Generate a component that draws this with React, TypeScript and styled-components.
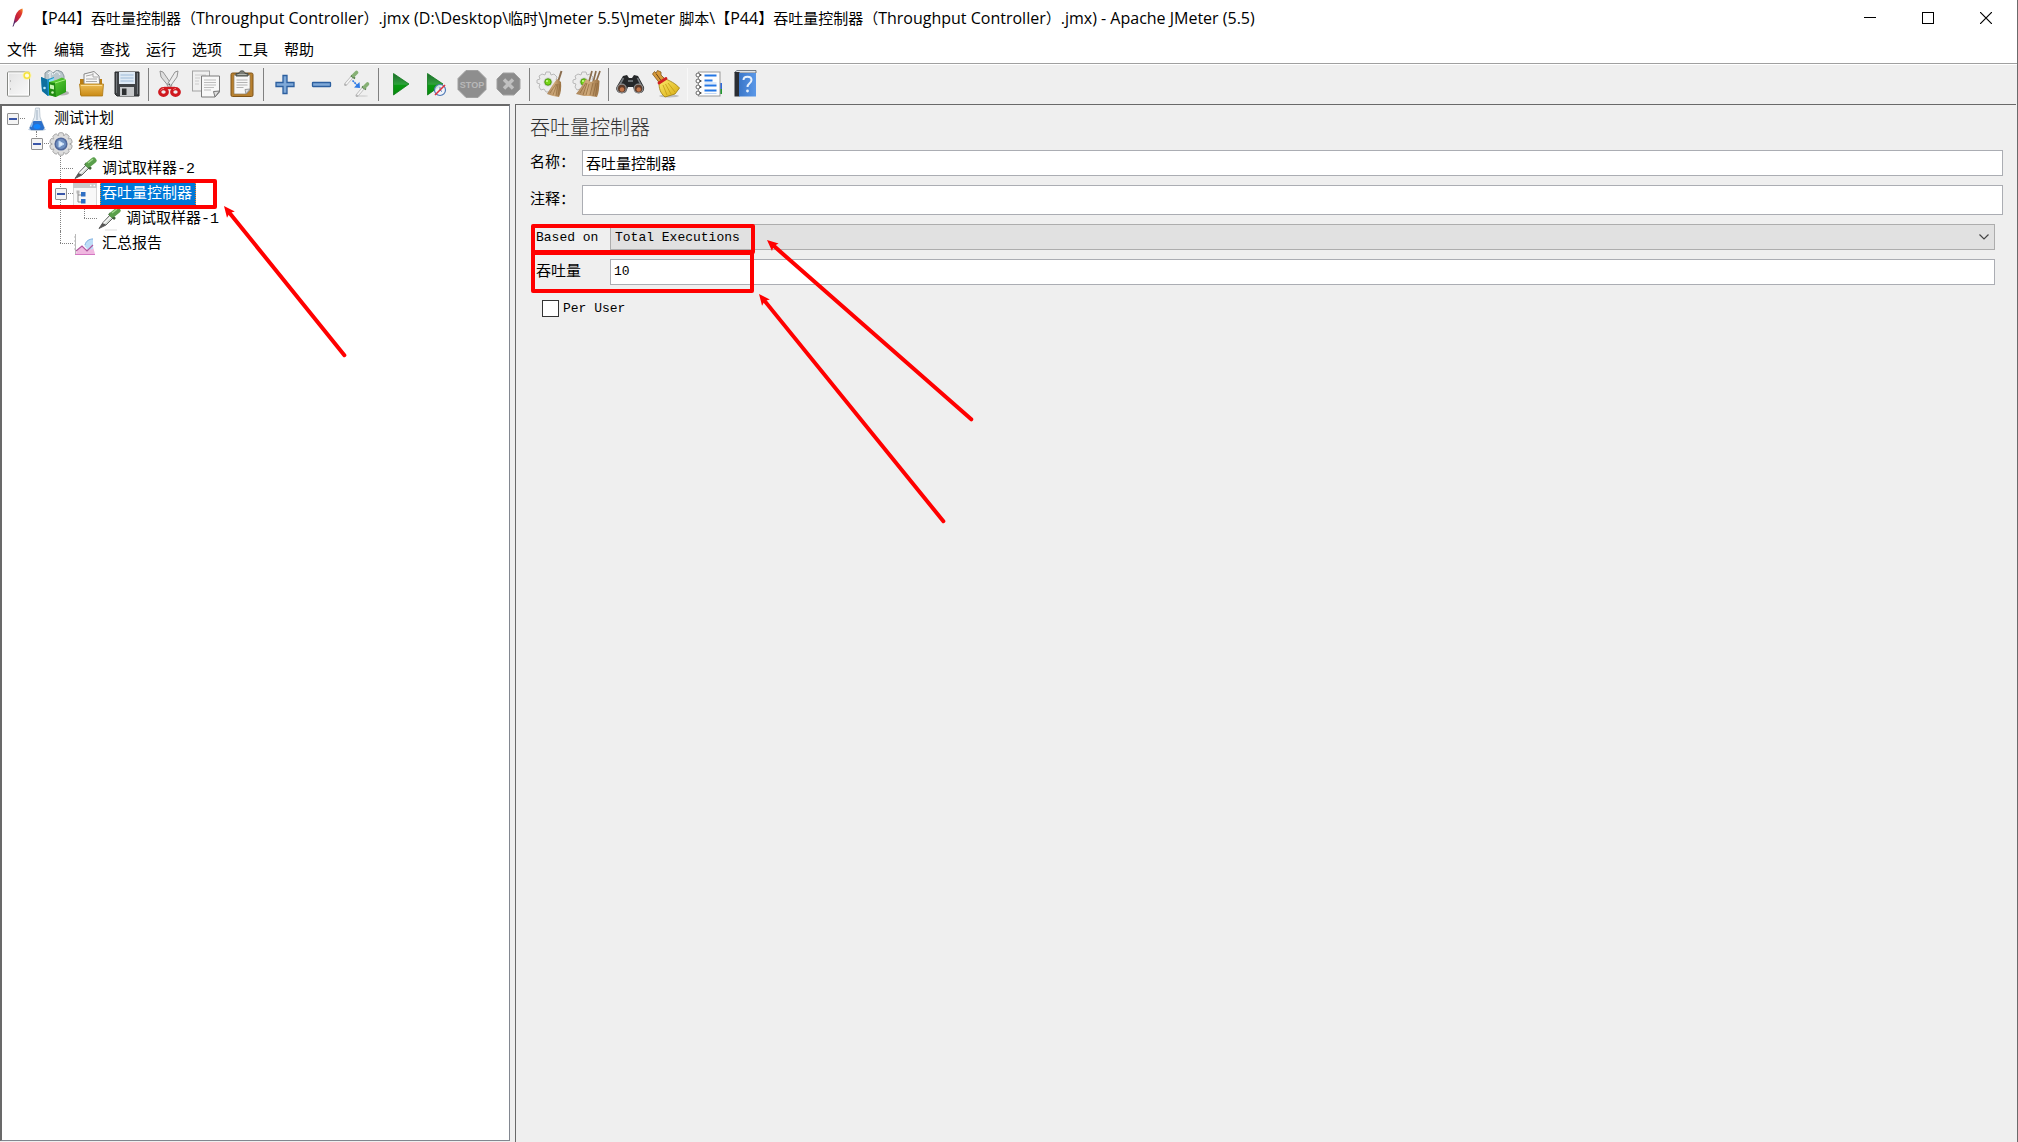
import React from "react";
import styled, { createGlobalStyle, css } from "styled-components";

const uiFont = `"Open Sans", "Noto Sans CJK SC", sans-serif`;
const formFont = `"Liberation Mono", "Noto Sans CJK SC", monospace`;

const GlobalStyle = createGlobalStyle`
  *, *::before, *::after { box-sizing: border-box; }
  body { margin: 0; background: #fff; }
  button, input, select { margin: 0; font: inherit; color: inherit; }
`;

const Window = styled.div`
  position: relative;
  display: flex;
  flex-direction: column;
  min-height: 100vh;
  border-right: 1px solid #6b6b6b;
  background: #fff;
  color: #000;
  font-family: ${uiFont};
  font-size: 15px;
  text-spacing-trim: space-all;
`;

const TitleBar = styled.header`
  display: flex;
  align-items: center;
  height: 36px;
  padding: 0 2px 0 10px;
`;

const Title = styled.h1`
  flex: 1;
  margin: 0 0 0 9px;
  font-size: 15px;
  font-weight: 400;
  line-height: 24px;
  white-space: pre;
`;

const LatinRun = styled.span`
  font-size: 16px;
`;

const CaptionButton = styled.button`
  display: flex;
  align-items: center;
  justify-content: center;
  width: 58px;
  height: 36px;
  padding: 0;
  border: 0;
  background: transparent;
`;

const MenuBar = styled.nav`
  display: flex;
  height: 28px;
  border-bottom: 1px solid #a0a0a0;
`;

const MenuItem = styled.button`
  padding: 0 8px 2px;
  border: 0;
  background: transparent;
  line-height: 24px;

  &:first-child {
    padding-right: 9px;
    padding-left: 7px;
  }
`;

const ToolBar = styled.div`
  display: flex;
  align-items: center;
  height: 40px;
  padding: 0 0 1px 1px;
  border-top: 1px solid #fff;
  background: #efefef;
`;

const ToolButton = styled.button`
  display: flex;
  align-items: center;
  justify-content: center;
  width: 36px;
  height: 36px;
  padding: 0;
  border: 0;
  background: transparent;
`;

const ToolSeparator = styled.span<{ $faint?: boolean }>`
  width: 1px;
  height: 33px;
  margin: 0 3px;
  background: ${(p) => (p.$faint ? "#f8f8f8" : "#808080")};
`;

const Workspace = styled.main`
  display: grid;
  grid-template-columns: 510px 1fr;
  column-gap: 5px;
  flex: 1;
  padding-right: 1px;
  background: #efefef;
`;

const TreePane = styled.aside`
  margin-bottom: 1px;
  border: solid #696969;
  border-width: 2px 1px 1px 2px;
  border-bottom-color: #828790;
  border-right-color: #828790;
  background: #fff;
  font-family: ${formFont};
`;

const TreeList = styled.ul<{ $nested?: boolean }>`
  margin: 0;
  padding: 0 0 0 ${(p) => (p.$nested ? 24 : 0)}px;
  list-style: none;
`;

const TreeItem = styled.li<{ $root?: boolean }>`
  position: relative;

  &::before {
    content: "";
    position: absolute;
    top: 12px;
    left: 10px;
    width: 13px;
    border-top: 1px dotted #808080;
  }

  ${(p) =>
    !p.$root &&
    css`
      &::after {
        content: "";
        position: absolute;
        top: 0;
        bottom: 0;
        left: 10px;
        border-left: 1px dotted #808080;
      }
      &:last-child::after {
        bottom: auto;
        height: 12px;
      }
    `}
`;

const TreeRow = styled.div`
  display: flex;
  align-items: center;
  height: 25px;
  padding-left: 5px;
`;

const Toggle = styled.button`
  position: relative;
  z-index: 1;
  display: flex;
  align-items: center;
  justify-content: center;
  width: 12px;
  height: 12px;
  padding: 0;
  border: 1px solid #919191;
  border-radius: 1px;
  background: #f4f4f4;

  &::before {
    content: "";
    width: 8px;
    height: 2px;
    background: #3a56a8;
  }
`;

const ToggleSpace = styled.span`
  width: 12px;
`;

const NodeIcon = styled.span`
  display: flex;
  margin: 0 3px 0 6px;
`;

const NodeLabel = styled.span<{ $selected?: boolean }>`
  height: 25px;
  padding: 1px 3px 0 1px;
  border: 1px dotted ${(p) => (p.$selected ? "#ff8728" : "transparent")};
  background: ${(p) => (p.$selected ? "#0078d7" : "transparent")};
  color: ${(p) => (p.$selected ? "#fff" : "#000")};
  line-height: 24px;
  white-space: nowrap;
`;

const Editor = styled.section`
  padding: 0 13px 0 14px;
  border: solid #696969;
  border-width: 1px 0 0 1px;
  font-family: ${formFont};
`;

const EditorTitle = styled.h2`
  margin: 0;
  padding-top: 5px;
  color: #333;
  font-size: 20px;
  font-weight: 300;
  line-height: 40px;
`;

const Field = styled.div<{ $labelWidth: number }>`
  display: grid;
  grid-template-columns: ${(p) => p.$labelWidth}px 1fr;
  align-items: center;
  margin-bottom: 9px;
`;

const FieldLabel = styled.label<{ $latin?: boolean }>`
  padding-top: 2px;
  font-size: ${(p) => (p.$latin ? 13 : 15)}px;
  line-height: 24px;
  white-space: nowrap;
`;

const TextInput = styled.input<{ $tall?: boolean; $latin?: boolean }>`
  width: 100%;
  height: ${(p) => (p.$tall ? 30 : 26)}px;
  padding: 0 3px 1px;
  border: 1px solid #abadb3;
  border-radius: 0;
  outline: 0;
  background: #fff;
  font-size: ${(p) => (p.$latin ? 13 : 15)}px;
`;

const Settings = styled.div`
  padding: 0 8px 0 6px;
`;

const SelectBox = styled.div`
  position: relative;

  svg {
    position: absolute;
    top: 10px;
    right: 6px;
    pointer-events: none;
  }
`;

const Select = styled.select`
  display: block;
  width: 100%;
  height: 26px;
  padding: 1px 4px 0;
  border: 1px solid #adadad;
  border-radius: 0;
  outline: 0;
  appearance: none;
  background: #e1e1e1;
  font-size: 13px;
`;

const CheckRow = styled.label`
  display: flex;
  align-items: center;
  gap: 4px;
  margin-top: 15px;
  padding-left: 6px;
  font-size: 13px;
  line-height: 17px;
`;

const CheckBox = styled.input`
  width: 17px;
  height: 17px;
  border: 1px solid #333;
  appearance: none;
  background: #fff;
`;

const Markup = styled.svg`
  position: absolute;
  top: 0;
  left: 0;
  pointer-events: none;
`;

const GradientDefs = styled.svg`
  position: absolute;
`;

/* ---------- drawings ---------- */

const Feather = () => (
  <svg width="14" height="20" viewBox="0 0 14 20">
    <defs>
      <linearGradient id="feather" x1="0" y1="1" x2="1" y2="0">
        <stop offset="0" stopColor="#6b2a7b" />
        <stop offset=".4" stopColor="#c4203c" />
        <stop offset=".75" stopColor="#e0392d" />
        <stop offset="1" stopColor="#f69923" />
      </linearGradient>
    </defs>
    <path d="M12.500 .5 C8.500 1.500 6 5 5 9 L4 13 L3.500 16 L6.500 14 C10.500 10 13.500 5 12.500 .5Z" fill="url(#feather)" />
    <path d="M5 13 L3 18.500" stroke="#4a2a66" strokeWidth="1" fill="none" />
  </svg>
);

const Icon = ({ children }: { children: React.ReactNode }) => (
  <svg width="30" height="28" viewBox="0 0 30 28">{children}</svg>
);

const Gradients = () => (
  <GradientDefs width="0" height="0">
    <defs>
      <linearGradient id="page" x1="0" y1="0" x2="1" y2="1">
        <stop offset="0" stopColor="#e2e2e2" />
        <stop offset="1" stopColor="#fafafa" />
      </linearGradient>
      <linearGradient id="folder" x1="0" y1="0" x2="0" y2="1">
        <stop offset="0" stopColor="#edbd55" />
        <stop offset="1" stopColor="#c98a16" />
      </linearGradient>
      <linearGradient id="play" x1="0" y1="0" x2="0" y2="1">
        <stop offset="0" stopColor="#1d6b2c" />
        <stop offset=".5" stopColor="#2fa13c" />
        <stop offset=".55" stopColor="#0a9a12" />
        <stop offset="1" stopColor="#078a0c" />
      </linearGradient>
      <linearGradient id="broom" x1="0" y1="0" x2="1" y2="0">
        <stop offset="0" stopColor="#a98358" />
        <stop offset=".5" stopColor="#d1ac7d" />
        <stop offset="1" stopColor="#9b7344" />
      </linearGradient>
      <linearGradient id="green" x1="0" y1="0" x2="1" y2="1">
        <stop offset="0" stopColor="#6bdc3c" />
        <stop offset="1" stopColor="#1d9212" />
      </linearGradient>
      <linearGradient id="blueBook" x1="0" y1="0" x2="1" y2="0">
        <stop offset="0" stopColor="#3a76c8" />
        <stop offset="1" stopColor="#5b98e8" />
      </linearGradient>
      <linearGradient id="gold" x1="0" y1="0" x2="1" y2="1">
        <stop offset="0" stopColor="#fbe96a" />
        <stop offset="1" stopColor="#d8ab10" />
      </linearGradient>
    </defs>
  </GradientDefs>
);

const NewIcon = () => (
  <Icon>
    <rect x="3.500" y="2" width="22" height="24" rx="1" fill="url(#page)" stroke="#858783" />
    <rect x="4.500" y="3" width="20" height="22" fill="none" stroke="#fff" />
    <path d="M6.500 10v2M6.500 18v2" stroke="#bbb" />
    <circle cx="23" cy="5.500" r="4.500" fill="#fff59a" opacity=".6" />
    <circle cx="23" cy="5.500" r="2.800" fill="#fffce0" stroke="#f5e23c" strokeWidth="1.500" />
  </Icon>
);

const TemplatesIcon = () => (
  <Icon>
    <ellipse cx="22" cy="23" rx="7" ry="2.500" fill="#777" opacity=".5" />
    <path d="M5 3 L9 0 L13 3 L17 0 L22 2 L24 6 V14 H5Z" fill="#b9c6cc" stroke="#89979d" />
    <path d="M8 4c2-3 4-3 5 1M14 4c2-3 4-3 6 1M10 2v8" stroke="#f4f8fa" fill="none" />
    <path d="M1 7 L7 9.500 L14 7 L13 24 L8 26 L2 21Z" fill="#1b93c9" />
    <path d="M1 7 L7 9.500 L8 26 L2 21Z" fill="#0d6f9f" />
    <path d="M9 10 L14 8 V12 L9 14Z" fill="#8fdcf5" />
    <path d="M9 12 L16 10 L22 7.500 L26 9.500 L26 22 L16 27 L9 25Z" fill="url(#green)" />
    <path d="M9 12 L15 13 L16 27 L9 25Z" fill="#1f8a12" />
    <path d="M10 14.500l4 1v4l-4-1z" fill="#c9f5b4" />
    <path d="M15 13 L26 9.500" stroke="#a4f07d" />
    <circle cx="4.500" cy="18" r="1.300" fill="#b7e7fa" /><circle cx="12.500" cy="22.500" r="1.300" fill="#cbf5b7" />
  </Icon>
);

const OpenIcon = () => (
  <Icon>
    <path d="M4 9h22v16H4z" fill="#bb7e14" />
    <path d="M8 4 L18 1.500 L23 6 L24 18 H8Z" fill="#f7f7f7" stroke="#888" />
    <path d="M10 6l7-1.500M10 9h11M10 11.500h11M17 3v4h5" stroke="#aaa" fill="none" />
    <path d="M3.500 14 H27.500 L26.500 26 H5Z" fill="url(#folder)" stroke="#ad7914" strokeWidth=".8" />
    <path d="M5 15.500H26" stroke="#fbdc93" />
  </Icon>
);

const SaveIcon = () => (
  <Icon>
    <path d="M3 2h24v24H5l-2-2z" fill="#3f4245" stroke="#26282a" />
    <rect x="7" y="2" width="16" height="12" fill="#dfeaf5" />
    <path d="M8.500 5h13M8.500 8h13M8.500 11h13" stroke="#9db9d8" strokeWidth="1.200" />
    <rect x="8" y="17" width="14" height="9" fill="#c6c8ca" />
    <rect x="10" y="18.500" width="4.500" height="6.500" fill="#2d2f31" />
    <path d="M4.500 3v20M25.500 3v21" stroke="#74787c" />
  </Icon>
);

const CutIcon = () => (
  <Icon>
    <path d="M5 1 L8 2 L17 15 L15 18 L6 7Z" fill="#dedede" stroke="#8a8a8a" strokeWidth=".9" />
    <path d="M23 1 L20 2 L12 15 L14 18 L22 7Z" fill="#ececec" stroke="#8a8a8a" strokeWidth=".9" />
    <circle cx="14.300" cy="14.500" r=".9" fill="#555" />
    <ellipse cx="8.500" cy="22" rx="3.800" ry="3.400" fill="none" stroke="#d0191f" strokeWidth="3.200" />
    <ellipse cx="20.500" cy="22" rx="3.800" ry="3.400" fill="none" stroke="#d0191f" strokeWidth="3.200" />
    <path d="M9 18 L14.500 18 L20 18" stroke="#d0191f" strokeWidth="2.400" fill="none" />
    <path d="M5.500 20.500c.7-1.400 2-2 3.500-2M18 20c.7-1 1.800-1.500 3-1.500" stroke="#f07a7c" fill="none" />
  </Icon>
);

const CopyIcon = () => (
  <Icon>
    <rect x="1.500" y="1" width="17" height="20" fill="#f0f0f0" stroke="#a3a3a3" />
    <path d="M4 5h11M4 8h5M4 11h4M4 14h4" stroke="#ccc" />
    <path d="M10.500 6 H28.500 V22 L24 27 H10.500Z" fill="#f8f8f8" stroke="#7b7b7b" />
    <path d="M13 10h12M13 12.500h12M13 15h12M13 17.500h10M13 20h7" stroke="#bdbdbd" />
    <path d="M28.500 21 L22.500 21.500 L24 27Z" fill="#ddd" stroke="#777" />
  </Icon>
);

const PasteIcon = () => (
  <Icon>
    <rect x="4" y="3" width="22" height="23.500" rx="1.500" fill="#b8802e" stroke="#7f541a" />
    <path d="M7 5h16v15l-4 4H7z" fill="#f7f7f7" stroke="#8c7b5f" strokeWidth=".7" />
    <path d="M9.500 10h11M9.500 12.500h11M9.500 15h11M9.500 17.500h7" stroke="#b3b3b3" />
    <path d="M23 19 L18 19.500 L19 24Z" fill="#ddd" stroke="#888" strokeWidth=".8" />
    <path d="M9 6 V3.500 H12 C12 0 18 0 18 3.500 H21 V6Z" fill="#797c75" stroke="#4b4e48" />
    <path d="M10.500 4.500h9" stroke="#b5b8b1" />
  </Icon>
);

const PlusIcon = () => (
  <Icon>
    <path d="M13 5.500h4v7h7v4h-7v7h-4v-7H6v-4h7z" fill="#7fa9d8" stroke="#2c5f9f" strokeWidth="1.300" />
  </Icon>
);

const MinusIcon = () => (
  <Icon>
    <rect x="6.500" y="12.500" width="18" height="4" rx=".5" fill="#7fa9d8" stroke="#2c5f9f" strokeWidth="1.300" />
  </Icon>
);

const ToggleIcon = () => (
  <Icon>
    <ellipse cx="20" cy="26" rx="6" ry="1" fill="#ccc" opacity=".6" />
    <path d="M3.500 14.500 L10 7" stroke="#b5b5b5" strokeWidth="3" strokeLinecap="round" />
    <path d="M4 14 L10 7" stroke="#f6f6f6" strokeWidth="1.800" />
    <path d="M9 5.500l4 3" stroke="#537b49" strokeWidth="1.600" />
    <path d="M11.500 5.500 L14.500 2.500" stroke="#86b074" strokeWidth="3.600" strokeLinecap="round" />
    <path d="M15 25.500 L21 18.500" stroke="#b5b5b5" strokeWidth="3" strokeLinecap="round" />
    <path d="M15.500 25 L21 18.500" stroke="#f6f6f6" strokeWidth="1.800" />
    <path d="M20 16.500l4 3" stroke="#537b49" strokeWidth="1.600" />
    <path d="M22.500 17 L25.500 14" stroke="#86b074" strokeWidth="3.600" strokeLinecap="round" />
    <path d="M10.500 10.500 L16 16" stroke="#2f7be5" strokeWidth="1.600" strokeDasharray="2 .7" />
    <path d="M18 18 L17.500 12 L12 17.500Z" fill="#2f7be5" />
  </Icon>
);

const StartIcon = () => (
  <Icon>
    <path d="M8.500 3.500 L24 14 L8.500 25Z" fill="url(#play)" stroke="#0d7818" strokeWidth=".8" />
  </Icon>
);

const StartNowIcon = () => (
  <Icon>
    <path d="M6.500 3.500 L22 14 L6.500 25Z" fill="url(#play)" stroke="#0d7818" strokeWidth=".8" />
    <circle cx="19" cy="20" r="5.500" fill="#f0f3fa" fillOpacity=".85" stroke="#4e78b5" strokeWidth="1.200" />
    <path d="M19 17v3l2 1.500" stroke="#4e78b5" fill="none" />
    <path d="M14 25 L24 15" stroke="#dc3540" strokeWidth="1.600" />
  </Icon>
);

const StopIcon = () => (
  <Icon>
    <path d="M9 .5h12l8 8v11l-8 8H9l-8-8v-11z" fill="#8e8e8e" stroke="#a0a0a0" />
    <text x="15" y="18" textAnchor="middle" fontFamily="Liberation Sans, sans-serif" fontSize="9" fontWeight="700" fill="#b8b8b8">STOP</text>
  </Icon>
);

const ShutdownIcon = () => (
  <Icon>
    <path d="M10 3h11l6 6v10l-6 6H10l-6-6V9z" fill="#8b8b8b" stroke="#a0a0a0" />
    <path d="M11 9.500l9 9M20 9.500l-9 9" stroke="#c0c0c0" strokeWidth="3.400" />
  </Icon>
);

const Cog = () => (
  <>
    <path d="M6 4l3 1 1-3h4l1 3 3-1 3 3-1 3 3 1v4l-3 1-1 3-4 2-2 1h-3l-2-3-3 1-2-3 1-3-3-1v-3l3-1-1-3z" fill="#ececec" stroke="#b9b9b9" />
    <circle cx="12" cy="12" r="4.500" fill="#cfcfcf" />
    <circle cx="12" cy="12" r="3.200" fill="#76d516" stroke="#4c9e0b" />
    <circle cx="11" cy="11" r="1" fill="#ceff91" />
  </>
);

const ClearIcon = () => (
  <Icon>
    <Cog />
    <path d="M25.500 1 L21 15" stroke="#8a6d4e" strokeWidth="2" />
    <path d="M21 9 L25 12 C25.500 18 25 23 23 27 L17 26 L11 24 C14 19 17 14 21 9Z" fill="url(#broom)" />
    <path d="M14 23 L20 14M17 25 L21 14M20 26 L22 14M22 26 L24 14" stroke="#8c6639" strokeWidth=".6" />
  </Icon>
);

const ClearAllIcon = () => (
  <Icon>
    <Cog />
    <path d="M20 1 L16 15M28 1 L23 15M24 1l-3 12" stroke="#8a6d4e" strokeWidth="1.700" />
    <path d="M14 9 L19 12 L25 9 L27.500 11 C27 18 27 23 25 27 L18 26 L12 26 L4 24 C8 19 11 14 14 9Z" fill="url(#broom)" />
    <path d="M8 23 L14 13M11 25 L15 13M14 25 L17 14M18 25l3-12M21 26l3-13M23.500 26l2-13" stroke="#8c6639" strokeWidth=".7" />
  </Icon>
);

const SearchIcon = () => (
  <Icon>
    <path d="M8 6 L12 5 L14 8 H17 L19 5 L23 6 L29 17 C30 22 25 25 20 22 L18 17 H13 L11 22 C6 25 0 22 1.500 17Z" fill="#26282a" />
    <path d="M8.500 8 L4 16M22.500 8 L26 15" stroke="#777c80" strokeWidth="1.600" />
    <circle cx="6.800" cy="18.500" r="4.400" fill="#5d3b2a" stroke="#8e8e8e" strokeWidth="1.200" />
    <circle cx="23.500" cy="18.500" r="4.400" fill="#5d3b2a" stroke="#8e8e8e" strokeWidth="1.200" />
    <circle cx="7" cy="19.500" r="2.200" fill="#c4764a" /><circle cx="23.700" cy="19.500" r="2.200" fill="#c4764a" />
    <path d="M13 11h5" stroke="#83888c" strokeWidth="1.500" />
  </Icon>
);

const ResetIcon = () => (
  <Icon>
    <ellipse cx="18" cy="26" rx="10" ry="1.500" fill="#aaa" opacity=".7" />
    <path d="M1.500 4 L3.500 1.500 L5 3 L6.500 .5 L10 2 L10 5 L14 9 L8.500 13Z" fill="#d79a3a" stroke="#80561c" strokeWidth=".8" />
    <path d="M5 3.500l5 7" stroke="#6c4717" />
    <path d="M8 13 L15 9 C19 11 24 13 28.500 18 L24 24 L14 27 C9 23 8 18 8 13Z" fill="url(#gold)" stroke="#9c7b0c" strokeWidth=".8" />
    <path d="M12 15l4 10M14.500 14l5.500 10M17 13l7 9" stroke="#c39a13" strokeWidth=".8" />
    <path d="M8 13 L15 8.500" stroke="#d02020" strokeWidth="2.800" strokeLinecap="round" />
  </Icon>
);

const FunctionIcon = () => (
  <Icon>
    <rect x="25" y="13" width="3" height="6" fill="#2f6bdc" /><rect x="25" y="19" width="3" height="5" fill="#1f9a2c" />
    <rect x="4.500" y="2" width="21.500" height="24" fill="#fdfdfd" stroke="#9a9a9a" />
    <path d="M10.500 5.500h12" stroke="#2376e5" strokeWidth="2" />
    <path d="M10.500 10.500h8M10.500 15.500h12M10.500 20.500h12" stroke="#2376e5" strokeWidth="1.800" />
    <path d="M10.500 23.500h12M10.500 13h12" stroke="#c2d8f5" />
    {[5, 11, 17, 23].map((y) => (
      <g key={y}>
        <circle cx="4" cy={y} r="2" fill="#fff" stroke="#666" />
        <circle cx="6.500" cy={y} r="1" fill="#444" />
      </g>
    ))}
  </Icon>
);

const HelpIcon = () => (
  <Icon>
    <path d="M5 2 L7 .5 H26 V3 H5Z" fill="#dfe3e8" stroke="#59616b" strokeWidth=".8" />
    <rect x="4.500" y="2" width="5" height="24.500" fill="#2a2d33" />
    <rect x="9" y="3" width="17" height="23.500" fill="url(#blueBook)" />
    <path d="M13.500 10 C13.500 5.500 21.500 5.500 21.500 10 C21.500 13.500 17.500 13 17.500 17" stroke="#e8f1fc" strokeWidth="2" fill="none" />
    <circle cx="17.500" cy="21" r="1.400" fill="#e8f1fc" />
  </Icon>
);

const Small = ({ children }: { children: React.ReactNode }) => (
  <svg width="24" height="24" viewBox="0 0 24 24">{children}</svg>
);

const FlaskIcon = () => (
  <Small>
    <ellipse cx="12" cy="22.500" rx="9" ry="1.500" fill="#b9cbe0" />
    <path d="M10.500 1 L14.500 1 L15 10 L19.500 21 L18 23 H6 L4.500 21 L9.500 10Z" fill="#e6edf4" stroke="#b4c0cc" strokeWidth=".8" />
    <path d="M8.500 14 L16.500 14 L19.500 21 L18 23 H6 L4.500 21Z" fill="#2b6fca" />
    <path d="M12 3v10" stroke="#9fb0c1" />
    <path d="M7.500 16l-1.500 4" stroke="#8bbcf2" strokeWidth="1.500" />
    <ellipse cx="12" cy="19.500" rx="3.500" ry="2.500" fill="#1185ff" />
  </Small>
);

const GearIcon = () => (
  <Small>
    {[0, 36, 72, 108, 144, 180, 216, 252, 288, 324].map((a) => (
      <rect key={a} x="9.500" y=".7" width="5" height="6" rx="1.500" fill="#dcdcdc" stroke="#9a9a9a" strokeWidth=".8" transform={`rotate(${a} 12 12)`} />
    ))}
    <circle cx="12" cy="12" r="8.700" fill="#dedede" />
    <circle cx="12" cy="12" r="5.800" fill="#6f8fc0" stroke="#50679a" strokeWidth="1.500" />
    <path d="M10 9l5 3-5 3z" fill="#e3effc" stroke="#c3daf5" />
  </Small>
);

const DropperIcon = () => (
  <Small>
    <path d="M8 23h12" stroke="#ddd" />
    <path d="M2 21.500 L6 15.500 L13 8 L16 11 L9 18Z" fill="#d5dbd6" stroke="#555" strokeWidth=".9" />
    <path d="M2 21.500 L6 15.500 L9 18Z" fill="#555" />
    <path d="M6.500 16.500L14 9.500" stroke="#fafafa" strokeWidth="1.400" />
    <path d="M12 6.500l6 5.500" stroke="#3e6238" strokeWidth="2.600" />
    <path d="M15.500 7.500 L20.500 3.500" stroke="#5a9f4b" strokeWidth="6" strokeLinecap="round" />
    <path d="M15.500 5.500L19.500 2.500" stroke="#a3d890" strokeWidth="1.500" strokeLinecap="round" />
  </Small>
);

const ControllerIcon = () => (
  <Small>
    <rect x=".5" y="1.500" width="23" height="22" fill="#f8f8f8" stroke="#d6d6d6" />
    <rect x="0" y="1" width="24" height="5" fill="#c9c9cb" />
    <path d="M17 3.500h1.500M20.500 3.500h1.500" stroke="#fff" strokeWidth="1.500" />
    <path d="M5 9v11M5 13h3M5 20h3" stroke="#888" fill="none" />
    <rect x="3.500" y="8.500" width="3" height="3" fill="#b5b5b5" />
    <rect x="8" y="10" width="4.500" height="4.500" fill="#2e6fc4" />
    <rect x="8" y="17" width="4.500" height="4.500" fill="#2e6fc4" />
  </Small>
);

const ReportIcon = () => (
  <Small>
    <path d="M2.500 2v20.500M1 5h2M1 9h2M1 13h2M1 17h2" stroke="#b9b9b9" />
    <path d="M3 22 L4 18 L9 14 L13 18 L19 11 L22 22Z" fill="#f0b8e0" />
    <path d="M11.500 14 C12 9 16 7 20 6.500 V17 L15 18Z" fill="#bdddf7" />
    <path d="M12 13c1-4 4-6 8-6" stroke="#83b2e0" fill="none" />
    <path d="M3 19 L9 14 L14 19 L20 13" stroke="#b0569f" strokeWidth="1.200" fill="none" />
    <path d="M2 22.500h20" stroke="#d476c2" />
  </Small>
);

/* ---------- data ---------- */

type ToolEntry = { name: string; icon: React.FC };

const toolGroups: ToolEntry[][] = [
  [
    { name: "新建", icon: NewIcon },
    { name: "模板", icon: TemplatesIcon },
    { name: "打开", icon: OpenIcon },
    { name: "保存", icon: SaveIcon },
  ],
  [
    { name: "剪切", icon: CutIcon },
    { name: "复制", icon: CopyIcon },
    { name: "粘贴", icon: PasteIcon },
  ],
  [
    { name: "展开", icon: PlusIcon },
    { name: "收起", icon: MinusIcon },
    { name: "切换", icon: ToggleIcon },
  ],
  [
    { name: "启动", icon: StartIcon },
    { name: "不停顿开始", icon: StartNowIcon },
    { name: "停止", icon: StopIcon },
    { name: "关闭", icon: ShutdownIcon },
  ],
  [
    { name: "清除", icon: ClearIcon },
    { name: "清除全部", icon: ClearAllIcon },
  ],
  [
    { name: "搜索", icon: SearchIcon },
    { name: "重置搜索", icon: ResetIcon },
  ],
  [
    { name: "函数助手", icon: FunctionIcon },
    { name: "帮助", icon: HelpIcon },
  ],
];

const menus = ["文件", "编辑", "查找", "运行", "选项", "工具", "帮助"];

const windowTitle =
  "【P44】吞吐量控制器（Throughput Controller）.jmx (D:\\Desktop\\临时\\Jmeter 5.5\\Jmeter 脚本\\【P44】吞吐量控制器（Throughput Controller）.jmx) - Apache JMeter (5.5)";

type Node = { label: string; icon: React.FC; selected?: boolean; children?: Node[] };

const plan: Node = {
  label: "测试计划",
  icon: FlaskIcon,
  children: [
    {
      label: "线程组",
      icon: GearIcon,
      children: [
        { label: "调试取样器-2", icon: DropperIcon },
        {
          label: "吞吐量控制器",
          icon: ControllerIcon,
          selected: true,
          children: [{ label: "调试取样器-1", icon: DropperIcon }],
        },
        { label: "汇总报告", icon: ReportIcon },
      ],
    },
  ],
};

/* Latin letters are set one size up so that they balance the Chinese ones. */
const MixedText = ({ text }: { text: string }) => (
  <>
    {text.split(/([\x20-\x7e]+)/).map((run, index) =>
      index % 2 ? <LatinRun key={index}>{run}</LatinRun> : run
    )}
  </>
);

const TreeNode = ({ node, root }: { node: Node; root?: boolean }) => {
  const NodeDrawing = node.icon;
  return (
    <TreeItem $root={root} role="treeitem" aria-selected={!!node.selected}>
      <TreeRow>
        {node.children ? <Toggle type="button" aria-label={`收起 ${node.label}`} /> : <ToggleSpace />}
        <NodeIcon>
          <NodeDrawing />
        </NodeIcon>
        <NodeLabel $selected={node.selected}>{node.label}</NodeLabel>
      </TreeRow>
      {node.children && (
        <TreeList $nested role="group">
          {node.children.map((child) => (
            <TreeNode key={child.label} node={child} />
          ))}
        </TreeList>
      )}
    </TreeItem>
  );
};

const Arrow = ({ tip, tail }: { tip: [number, number]; tail: [number, number] }) => {
  const angle = (Math.atan2(tail[1] - tip[1], tail[0] - tip[0]) * 180) / Math.PI;
  const length = Math.hypot(tail[0] - tip[0], tail[1] - tip[1]);
  return (
    <g transform={`translate(${tip[0]} ${tip[1]}) rotate(${angle})`}>
      <path d={`M7 0H${length - 1}`} stroke="#f00" strokeWidth="4" strokeLinecap="round" />
      <path d="M0 0 L11 -5 L9 0 L11 5Z" fill="#f00" />
    </g>
  );
};

export default function App() {
  return (
    <>
      <GlobalStyle />
      <Window>
        <Gradients />
        <TitleBar>
          <Feather />
          <Title>
            <MixedText text={windowTitle} />
          </Title>
          <CaptionButton type="button" aria-label="最小化">
            <svg width="12" height="12"><path d="M0 5.500h12" stroke="#000" /></svg>
          </CaptionButton>
          <CaptionButton type="button" aria-label="最大化">
            <svg width="12" height="12"><rect x=".5" y=".5" width="11" height="11" fill="none" stroke="#000" /></svg>
          </CaptionButton>
          <CaptionButton type="button" aria-label="关闭窗口">
            <svg width="12" height="12"><path d="M0 0L12 12M12 0L0 12" stroke="#000" strokeWidth="1.200" /></svg>
          </CaptionButton>
        </TitleBar>
        <MenuBar>
          {menus.map((menu) => (
            <MenuItem key={menu} type="button">{menu}</MenuItem>
          ))}
        </MenuBar>
        <ToolBar role="toolbar">
          {toolGroups.map((group, index) => (
            <React.Fragment key={index}>
              {index > 0 && <ToolSeparator $faint={index === toolGroups.length - 1} />}
              {group.map(({ name, icon: Drawing }) => (
                <ToolButton key={name} type="button" aria-label={name}>
                  <Drawing />
                </ToolButton>
              ))}
            </React.Fragment>
          ))}
        </ToolBar>
        <Workspace>
          <TreePane>
            <TreeList role="tree">
              <TreeNode node={plan} root />
            </TreeList>
          </TreePane>
          <Editor>
            <EditorTitle>吞吐量控制器</EditorTitle>
            <Field $labelWidth={52}>
              <FieldLabel htmlFor="name">名称：</FieldLabel>
              <TextInput id="name" defaultValue="吞吐量控制器" />
            </Field>
            <Field $labelWidth={52}>
              <FieldLabel htmlFor="comment">注释：</FieldLabel>
              <TextInput id="comment" $tall />
            </Field>
            <Settings>
              <Field $labelWidth={74}>
                <FieldLabel htmlFor="basis" $latin>Based on</FieldLabel>
                <SelectBox>
                  <Select id="basis" defaultValue="total">
                    <option value="total">Total Executions</option>
                  </Select>
                  <svg width="10" height="6"><path d="M.5 .5L5 5L9.500 .5" fill="none" stroke="#444" strokeWidth="1.200" /></svg>
                </SelectBox>
              </Field>
              <Field $labelWidth={74}>
                <FieldLabel htmlFor="throughput">吞吐量</FieldLabel>
                <TextInput id="throughput" $latin defaultValue="10" />
              </Field>
              <CheckRow>
                <CheckBox type="checkbox" />
                Per User
              </CheckRow>
            </Settings>
          </Editor>
        </Workspace>
        <Markup width="1000" height="540" aria-hidden="true">
          <g fill="none" stroke="#f00" strokeWidth="4" strokeLinejoin="round">
            <rect x="50" y="181" width="165" height="26" />
            <rect x="533" y="226" width="220" height="26" />
            <rect x="533" y="253" width="219" height="38" />
          </g>
          <Arrow tip={[224, 206]} tail={[345, 356]} />
          <Arrow tip={[767, 240]} tail={[972, 420]} />
          <Arrow tip={[759, 294]} tail={[944, 522]} />
        </Markup>
      </Window>
    </>
  );
}
